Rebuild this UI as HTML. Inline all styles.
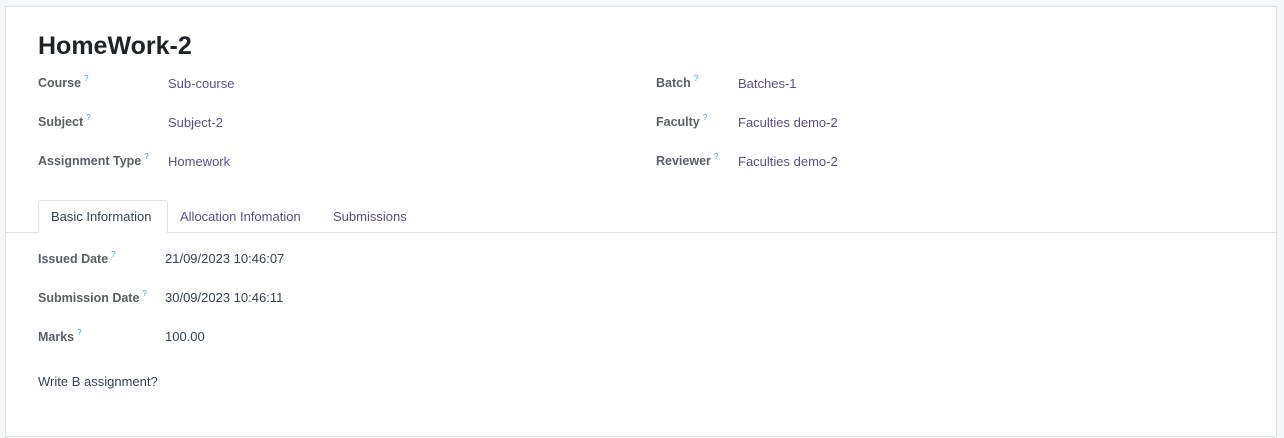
<!DOCTYPE html>
<html><head><style>
body{margin:0;width:1284px;height:438px;background:#f6f7f9;font-family:"Liberation Sans",sans-serif;font-size:13px;color:#374151;position:relative;overflow:hidden}
.sheet{position:absolute;left:5px;top:6px;width:1272px;height:431px;background:#fff;border:1px solid #dee2e6;box-sizing:border-box}
.a{position:absolute;white-space:nowrap;line-height:16px}
.l{font-weight:bold;color:#5a5f66;font-size:12.5px}
.l sup{color:#3ea6c8;font-size:8px;font-weight:normal;margin-left:3px;vertical-align:6px;line-height:0}
.v{color:#5b4d8c}
.d{color:#374151}
h1{position:absolute;left:38px;top:30px;margin:0;font-size:25px;font-weight:bold;color:#1f2328;line-height:32px}
.tabline{position:absolute;left:5px;right:6px;top:232px;border-top:1px solid #dee2e6}
.tab{position:absolute;left:38px;top:200px;width:130px;height:33px;border:1px solid #dee2e6;border-bottom:none;background:#fff;border-radius:3px 3px 0 0;box-sizing:border-box}
</style></head><body>
<div class="sheet"></div>
<h1>HomeWork-2</h1>
<div class="a l" style="left:38px;top:75px">Course<sup>?</sup></div>
<div class="a v" style="left:168px;top:76px">Sub-course</div>
<div class="a l" style="left:38px;top:114px">Subject<sup>?</sup></div>
<div class="a v" style="left:168px;top:115px">Subject-2</div>
<div class="a l" style="left:38px;top:153px">Assignment Type<sup>?</sup></div>
<div class="a v" style="left:168px;top:154px">Homework</div>
<div class="a l" style="left:656px;top:75px">Batch<sup>?</sup></div>
<div class="a v" style="left:738px;top:76px">Batches-1</div>
<div class="a l" style="left:656px;top:114px">Faculty<sup>?</sup></div>
<div class="a v" style="left:738px;top:115px">Faculties demo-2</div>
<div class="a l" style="left:656px;top:153px">Reviewer<sup>?</sup></div>
<div class="a v" style="left:738px;top:154px">Faculties demo-2</div>
<div class="tabline"></div>
<div class="tab"></div>
<div class="a d" style="left:51px;top:209px">Basic Information</div>
<div class="a v" style="left:180px;top:209px">Allocation Infomation</div>
<div class="a v" style="left:333px;top:209px">Submissions</div>
<div class="a l" style="left:38px;top:251px">Issued Date<sup>?</sup></div>
<div class="a d" style="left:165px;top:251px">21/09/2023 10:46:07</div>
<div class="a l" style="left:38px;top:290px">Submission Date<sup>?</sup></div>
<div class="a d" style="left:165px;top:290px">30/09/2023 10:46:11</div>
<div class="a l" style="left:38px;top:329px">Marks<sup>?</sup></div>
<div class="a d" style="left:165px;top:329px">100.00</div>
<div class="a d" style="left:38px;top:374px">Write B assignment?</div>
</body></html>
